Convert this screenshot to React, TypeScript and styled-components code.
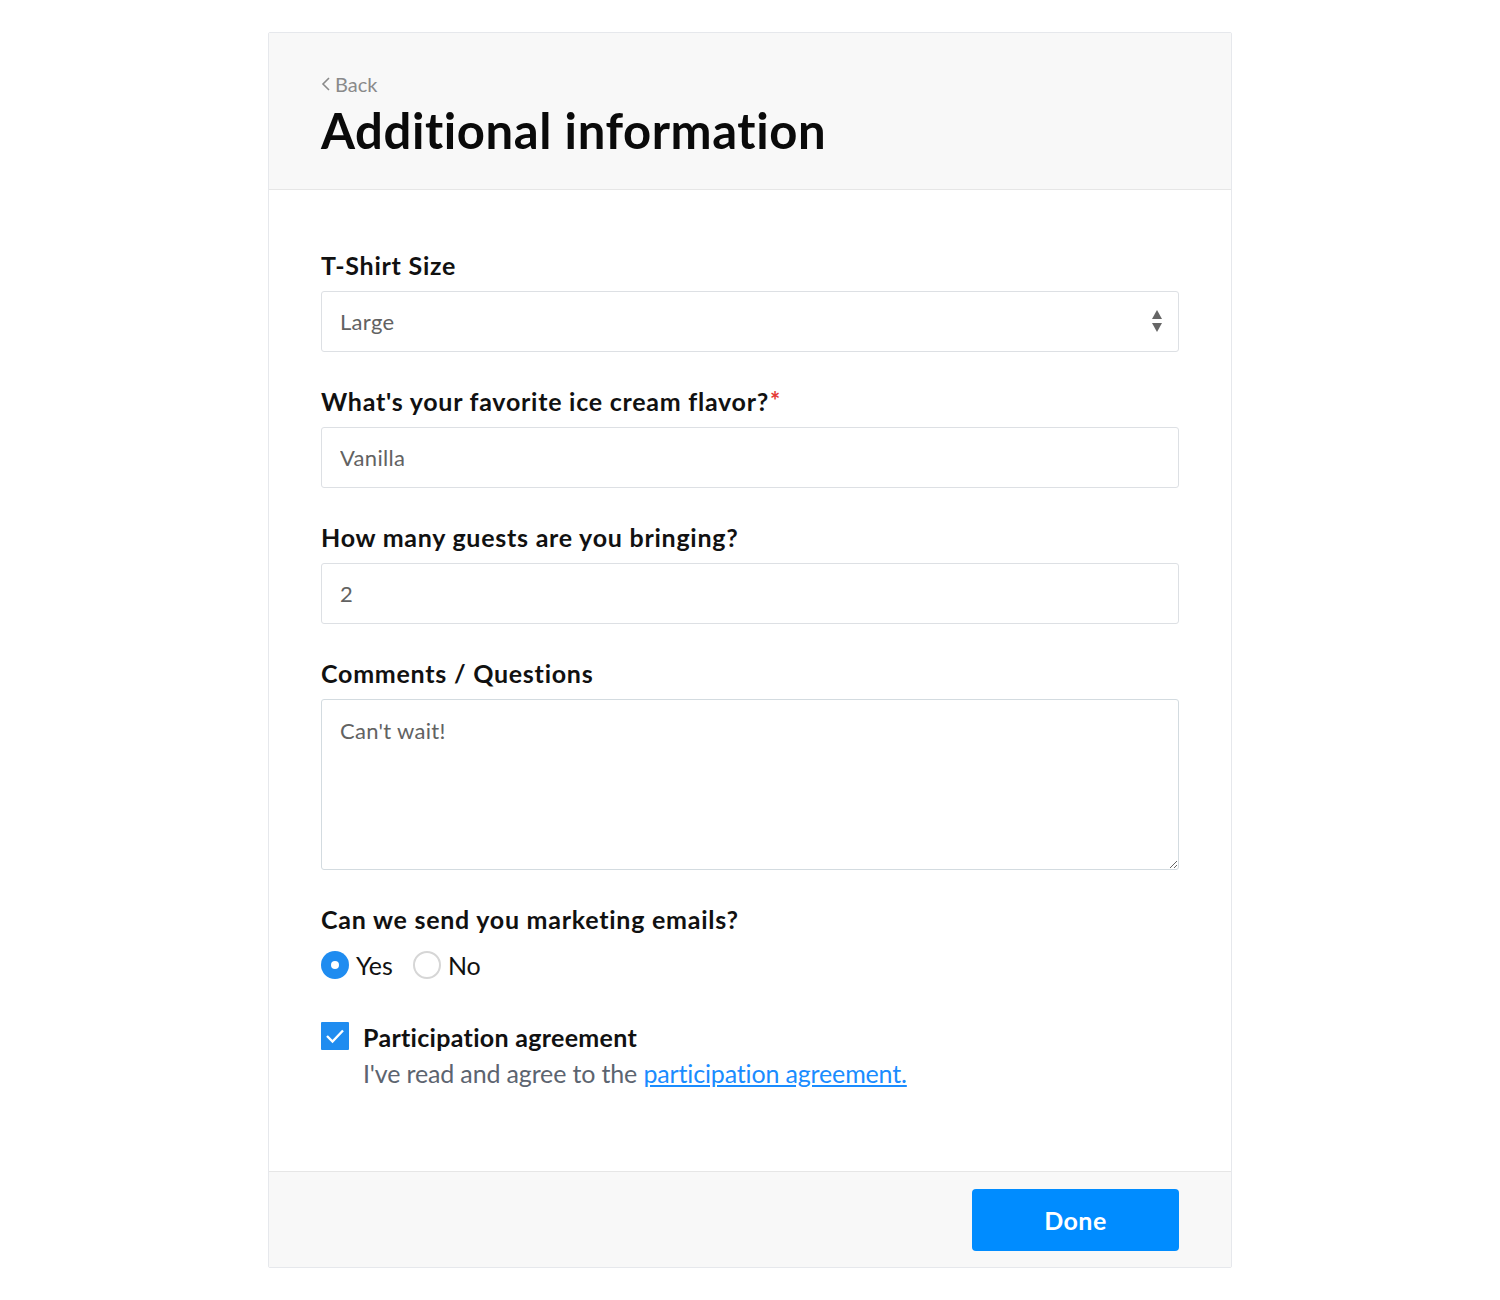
import React, { useState, useRef, useEffect } from "react";
import styled, { createGlobalStyle } from "styled-components";

const GlobalStyle = createGlobalStyle`
  body {
    margin: 0;
    background: #ffffff;
    font-family: Lato, "Open Sans", sans-serif;
    color: #111;
  }
  * { box-sizing: border-box; }
`;

const Page = styled.div`
  display: flex;
  justify-content: center;
  padding-top: 32px;
  padding-bottom: 32px;
`;

const Card = styled.div`
  width: 964px;
  border: 1px solid #e6e8ec;
  border-radius: 2px;
  background: #fff;
  display: flex;
  flex-direction: column;
`;

const Header = styled.div`
  background: #f8f8f8;
  border-bottom: 1px solid #e6e6e6;
  padding: 39px 52px 26px;
  height: 157px;
`;

const BackLink = styled.a`
  display: inline-flex;
  align-items: center;
  gap: 4px;
  color: #8a8a8a;
  font-size: 20px;
  text-decoration: none;
  height: 24px;
  cursor: pointer;
`;

const Title = styled.h1`
  margin: 6px 0 0;
  font-size: 49px;
  font-weight: 700;
  line-height: 56px;
  color: #0a0a0a;
  letter-spacing: 0.6px;
`;

const Body = styled.div`
  padding: 60px 52px 52px;
  display: flex;
  flex-direction: column;
  gap: 34px;
  height: 981px;
`;

const Field = styled.div`
  display: flex;
  flex-direction: column;
  gap: 11px;
`;

const Label = styled.label`
  font-size: 25px;
  font-weight: 700;
  line-height: 30px;
  color: #111;
  letter-spacing: 0.75px;
`;

const Required = styled.span`
  color: #e53935;
  font-size: 24px;
  vertical-align: top;
  margin-left: 1px;
`;

const SelectWrap = styled.div`
  position: relative;
`;

const inputBase = `
  width: 100%;
  border: 1px solid #dde0e4;
  border-radius: 3px;
  background: #fff;
  font-family: Lato, "Open Sans", sans-serif;
  font-size: 22px;
  letter-spacing: 0.3px;
  color: #626262;
  padding: 0 18px;
  outline: none;
`;

const Select = styled.select`
  ${inputBase}
  height: 61px;
  appearance: none;
  -webkit-appearance: none;
`;

const SelectArrows = styled.svg`
  position: absolute;
  right: 16px;
  top: 19px;
  pointer-events: none;
`;

const TextInput = styled.input`
  ${inputBase}
  height: 61px;
`;

const TextArea = styled.textarea`
  ${inputBase}
  height: 171px;
  padding-top: 16px;
  line-height: 30px;
  resize: vertical;
  border-color: #d3dbe0;
  caret-color: #222;
`;

const RadioRow = styled.div`
  display: flex;
  align-items: center;
  gap: 20px;
  margin-top: 5px;
`;

const RadioOption = styled.label`
  display: flex;
  align-items: center;
  gap: 7px;
  font-size: 25px;
  line-height: 30px;
  color: #111;
  cursor: pointer;
`;

const RadioDot = styled.span<{ $checked: boolean }>`
  width: 28px;
  height: 28px;
  border-radius: 50%;
  background: ${(p) => (p.$checked ? "#1f8cf0" : "#fff")};
  border: ${(p) => (p.$checked ? "none" : "2px solid #d6d6d6")};
  display: flex;
  align-items: center;
  justify-content: center;
  &::after {
    content: "";
    display: ${(p) => (p.$checked ? "block" : "none")};
    width: 8px;
    height: 8px;
    border-radius: 50%;
    background: #fff;
  }
`;

const AgreementRow = styled.div`
  display: flex;
  gap: 14px;
  margin-top: 8px;
`;

const CheckBox = styled.span`
  width: 28px;
  height: 28px;
  flex-shrink: 0;
  background: #1f8cf0;
  border-radius: 1px;
  display: flex;
  align-items: center;
  justify-content: center;
`;

const AgreementText = styled.div`
  display: flex;
  flex-direction: column;
  gap: 6px;
`;

const AgreementTitle = styled.span`
  font-size: 25px;
  font-weight: 700;
  line-height: 30px;
  color: #111;
  letter-spacing: 0.3px;
`;

const AgreementNote = styled.span`
  font-size: 25px;
  line-height: 30px;
  color: #5c6470;
  letter-spacing: -0.15px;
`;

const Link = styled.a`
  color: #1a8cff;
  text-decoration: underline;
  cursor: pointer;
`;

const Footer = styled.div`
  background: #f8f8f8;
  border-top: 1px solid #e6e6e6;
  padding: 17px 52px 16px;
  display: flex;
  justify-content: flex-end;
`;

const DoneButton = styled.button`
  width: 207px;
  height: 62px;
  background: #008cff;
  border: none;
  border-radius: 4px;
  color: #fff;
  font-family: Lato, "Open Sans", sans-serif;
  font-size: 25px;
  font-weight: 700;
  letter-spacing: 0.5px;
  cursor: pointer;
`;

const App = () => {
  const [size, setSize] = useState("Large");
  const [flavor, setFlavor] = useState("Vanilla");
  const [guests, setGuests] = useState("2");
  const [comments, setComments] = useState("Can't wait!");
  const [marketing, setMarketing] = useState(true);
  const commentsRef = useRef<HTMLTextAreaElement>(null);

  useEffect(() => {
    const el = commentsRef.current;
    if (el) {
      el.focus();
      el.setSelectionRange(el.value.length, el.value.length);
    }
  }, []);

  return (
    <>
      <GlobalStyle />
      <Page>
        <Card>
          <Header>
            <BackLink>
              <svg width="10" height="16" viewBox="0 0 10 16">
                <path d="M8 2 L2 8 L8 14" fill="none" stroke="#8a8a8a" strokeWidth="1.6" />
              </svg>
              Back
            </BackLink>
            <Title>Additional information</Title>
          </Header>
          <Body>
            <Field>
              <Label>T-Shirt Size</Label>
              <SelectWrap>
                <Select value={size} onChange={(e) => setSize(e.target.value)}>
                  <option>Small</option>
                  <option>Medium</option>
                  <option>Large</option>
                  <option>X-Large</option>
                </Select>
                <SelectArrows width="12" height="22" viewBox="0 0 12 22">
                  <path d="M6 0 L11 9 L1 9 Z" fill="#666" />
                  <path d="M6 22 L11 13 L1 13 Z" fill="#666" />
                </SelectArrows>
              </SelectWrap>
            </Field>
            <Field>
              <Label>
                What's your favorite ice cream flavor?<Required>*</Required>
              </Label>
              <TextInput value={flavor} onChange={(e) => setFlavor(e.target.value)} />
            </Field>
            <Field>
              <Label>How many guests are you bringing?</Label>
              <TextInput value={guests} onChange={(e) => setGuests(e.target.value)} />
            </Field>
            <Field>
              <Label>Comments / Questions</Label>
              <TextArea
                ref={commentsRef}
                value={comments}
                onChange={(e) => setComments(e.target.value)}
              />
            </Field>
            <Field>
              <Label>Can we send you marketing emails?</Label>
              <RadioRow>
                <RadioOption onClick={() => setMarketing(true)}>
                  <RadioDot $checked={marketing} />
                  Yes
                </RadioOption>
                <RadioOption onClick={() => setMarketing(false)}>
                  <RadioDot $checked={!marketing} />
                  No
                </RadioOption>
              </RadioRow>
            </Field>
            <AgreementRow>
              <CheckBox>
                <svg width="20" height="16" viewBox="0 0 20 16">
                  <path d="M2 8 L7.5 13.5 L18 2.5" fill="none" stroke="#fff" strokeWidth="2.4" />
                </svg>
              </CheckBox>
              <AgreementText>
                <AgreementTitle>Participation agreement</AgreementTitle>
                <AgreementNote>
                  I've read and agree to the <Link>participation agreement.</Link>
                </AgreementNote>
              </AgreementText>
            </AgreementRow>
          </Body>
          <Footer>
            <DoneButton>Done</DoneButton>
          </Footer>
        </Card>
      </Page>
    </>
  );
};

export default App;
